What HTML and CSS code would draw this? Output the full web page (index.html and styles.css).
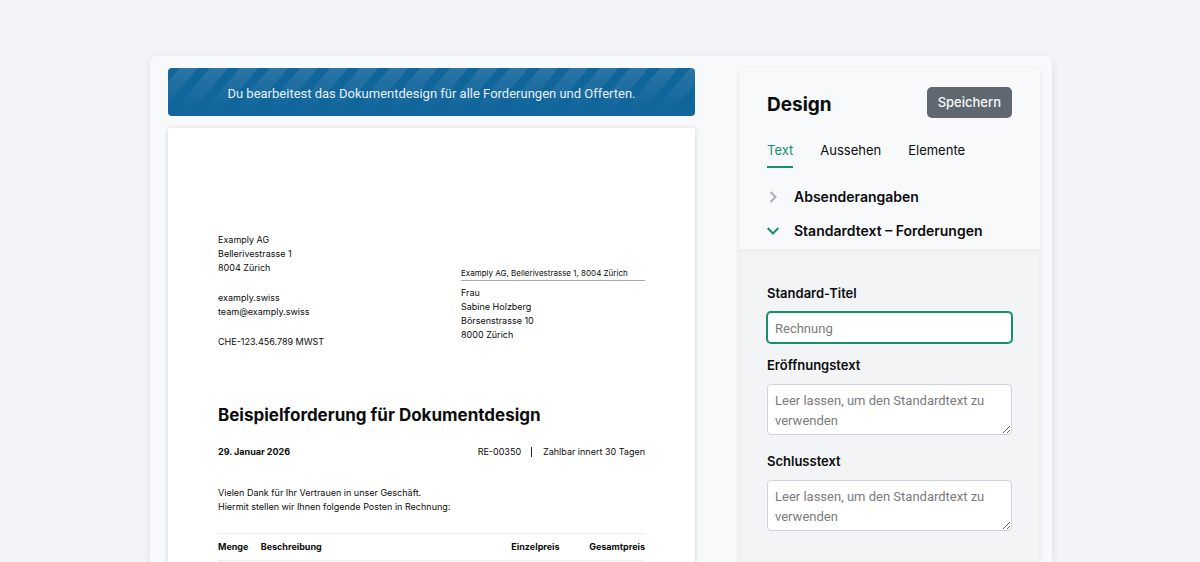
FILE: index.html
```html
<!DOCTYPE html>
<html lang="de">
<head>
<meta charset="utf-8">
<meta name="viewport" content="width=device-width, initial-scale=1">
<title>Dokumentdesign</title>
<link rel="stylesheet" href="styles.css">
</head>
<body>
<main class="editor">
  <section class="preview">
    <div class="banner">Du bearbeitest das Dokumentdesign für alle Forderungen und Offerten.</div>
    <article class="sheet">
      <div class="addresses">
        <address class="sender">
          <p>Examply AG<br>Bellerivestrasse 1<br>8004 Zürich</p>
          <p>examply.swiss<br>team@examply.swiss</p>
          <p>CHE-123.456.789 MWST</p>
        </address>
        <address class="recipient">
          <p class="return-line">Examply AG, Bellerivestrasse 1, 8004 Zürich</p>
          <p>Frau<br>Sabine Holzberg<br>Börsenstrasse 10<br>8000 Zürich</p>
        </address>
      </div>
      <h1 class="doc-title">Beispielforderung für Dokumentdesign</h1>
      <div class="meta">
        <strong class="date">29. Januar 2026</strong>
        <span>RE-00350</span>
        <span class="terms">Zahlbar innert 30 Tagen</span>
      </div>
      <p class="intro">Vielen Dank für Ihr Vertrauen in unser Geschäft.<br>Hiermit stellen wir Ihnen folgende Posten in Rechnung:</p>
      <table class="items">
        <thead>
          <tr>
            <th class="col-qty" scope="col">Menge</th>
            <th scope="col">Beschreibung</th>
            <th class="col-price" scope="col">Einzelpreis</th>
            <th class="col-total" scope="col">Gesamtpreis</th>
          </tr>
        </thead>
      </table>
    </article>
  </section>

  <aside class="panel">
    <header class="panel-head">
      <h2 class="panel-title">Design</h2>
      <button class="save" type="button">Speichern</button>
    </header>
    <nav class="tabs">
      <a class="tab active" href="#text" aria-current="page">Text</a>
      <a class="tab" href="#aussehen">Aussehen</a>
      <a class="tab" href="#elemente">Elemente</a>
    </nav>
    <div class="sections">
      <button class="section" type="button" aria-expanded="false">
        <svg class="chevron" viewBox="0 0 12 12" aria-hidden="true"><path d="M3.500 1 8.500 6 3.500 11"/></svg>
        Absenderangaben
      </button>
      <button class="section open" type="button" aria-expanded="true" aria-controls="texts">
        <svg class="chevron" viewBox="0 0 12 12" aria-hidden="true"><path d="M.7 3 6 8.500 11.300 3"/></svg>
        Standardtext – Forderungen
      </button>
    </div>
    <form class="fields" id="texts">
      <label for="title">Standard-Titel</label>
      <input class="field focused" id="title" type="text" placeholder="Rechnung">
      <label for="opening">Eröffnungstext</label>
      <textarea class="field" id="opening" rows="2" placeholder="Leer lassen, um den Standardtext zu verwenden"></textarea>
      <label for="closing">Schlusstext</label>
      <textarea class="field" id="closing" rows="2" placeholder="Leer lassen, um den Standardtext zu verwenden"></textarea>
    </form>
  </aside>
</main>
</body>
</html>
```
FILE: styles.css
```css
* { box-sizing: border-box; }

body {
  margin: 0;
  height: 100vh;
  overflow: hidden;
  padding: 56px 148px 0 150px;
  display: flex;
  background: #f3f4f8;
  color: #0b0c0d;
  font-family: Inter, "Liberation Sans", sans-serif;
  font-size: 13px;
}

h1, h2, p { margin: 0; }

.editor {
  flex: 1;
  display: grid;
  grid-template-columns: minmax(0, 527fr) minmax(0, 301fr);
  gap: 44px;
  padding: 12px 12px 0 18px;
  background: #f8f9fb;
  border-radius: 6px 6px 0 0;
  box-shadow: 0 3px 8px rgba(0, 0, 0, .09);
}

.preview {
  display: flex;
  flex-direction: column;
  gap: 12px;
}

.banner {
  padding: 16px 12px 12px;
  border-radius: 4px;
  background:
    linear-gradient(to bottom, rgba(16, 101, 155, 0), #10659b 90%),
    repeating-linear-gradient(130deg, #10659b 0 9px, #2a75a6 9px 23px);
  color: #e6f0f7;
  font-family: Roboto, "Liberation Sans", sans-serif;
  text-align: center;
  line-height: 20px;
}

.sheet {
  flex: 1;
  padding: 105px 50px 0;
  background: #fff;
  box-shadow: 0 1px 5px rgba(0, 0, 0, .17);
  font-size: 9px;
  line-height: 14px;
}

.addresses {
  display: grid;
  grid-template-columns: 243fr 184fr;
}

address { font-style: normal; }

.sender {
  display: grid;
  gap: 16px;
}

.recipient { padding-top: 33px; }

.return-line {
  margin-bottom: 5px;
  border-bottom: 1px solid #aaa;
  font-size: 8px;
}

.doc-title {
  margin-top: 54px;
  font-size: 17px;
  line-height: 24px;
}

.meta {
  display: flex;
  margin-top: 18px;
}

.date { flex: 1; }

.terms {
  position: relative;
  padding-left: 22px;
}

.terms::before {
  content: "";
  position: absolute;
  left: 10px;
  top: 2px;
  height: 10px;
  border-left: 1px solid #222;
}

.intro { margin-top: 27px; }

.items {
  width: 100%;
  margin-top: 19px;
  border-collapse: collapse;
  border-top: 1px solid #eee;
  border-bottom: 1px solid #eee;
}

.items th {
  padding: 6px 0;
  text-align: left;
}

.items .col-qty { width: 10%; }
.items .col-price { width: 20%; text-align: right; }
.items .col-total { width: 20%; text-align: right; }

.panel {
  display: flex;
  flex-direction: column;
  border-radius: 4px 4px 0 0;
  box-shadow: 0 1px 5px rgba(0, 0, 0, .09);
}

.panel-head {
  display: flex;
  align-items: center;
  justify-content: space-between;
  padding: 19px 28px 0;
}

.panel-title {
  padding-top: 4px;
  font-size: 19px;
  line-height: 24px;
  font-weight: 700;
}

.save {
  padding: 0 11px;
  border: 0;
  border-radius: 5px;
  background: #5f6870;
  color: #f8f9fb;
  font: 500 13px/31px Inter, "Liberation Sans", sans-serif;
}

.tabs {
  display: flex;
  gap: 27px;
  padding: 22px 28px 0;
}

.tab {
  padding-bottom: 6px;
  border-bottom: 2px solid transparent;
  color: inherit;
  line-height: 20px;
  text-decoration: none;
}

.tab.active {
  border-color: #168f6d;
  color: #168f6d;
}

.sections {
  display: grid;
  gap: 10px;
  padding: 17px 28px 6px;
}

.section {
  display: flex;
  align-items: center;
  gap: 15px;
  padding: 0;
  border: 0;
  background: none;
  color: inherit;
  font: 600 14px/24px Inter, "Liberation Sans", sans-serif;
}

.chevron {
  width: 12px;
  height: 12px;
  fill: none;
  stroke: #a9adb1;
  stroke-width: 2;
}

.open .chevron { stroke: #168f6d; }

.fields {
  flex: 1;
  display: flex;
  flex-direction: column;
  padding: 33px 28px 0;
  border-top: 1px solid #ebecee;
  background: #f3f4f6;
  box-shadow: inset 0 1px 4px rgba(0, 0, 0, .04);
}

.fields label {
  font-weight: 600;
  line-height: 20px;
}

.field {
  display: block;
  width: 100%;
  margin: 9px 0 16px;
  padding: 6px 7px 3px;
  border: 1px solid #ced2dc;
  border-radius: 4px;
  outline: 0;
  background: #fff;
  color: inherit;
  font: 13px/20px Roboto, "Liberation Sans", sans-serif;
}

.field.focused {
  margin-bottom: 12px;
  border-color: #168f6d;
  box-shadow: 0 0 0 1px #168f6d;
}

.field::placeholder { color: #7b7b7b; }
```
